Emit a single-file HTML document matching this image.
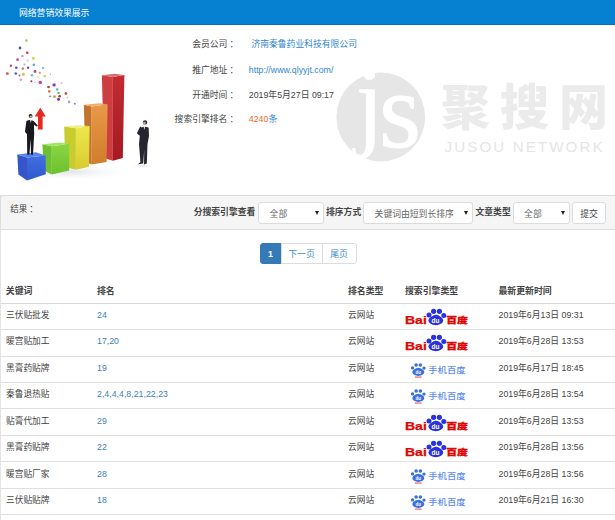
<!DOCTYPE html>
<html lang="zh-CN">
<head>
<meta charset="utf-8">
<title>网络营销效果展示</title>
<style>
*{box-sizing:border-box;margin:0;padding:0}
html,body{width:615px;height:520px;overflow:hidden;background:#fff}
body{font-family:"Liberation Sans","Noto Sans CJK SC",sans-serif;font-size:8.7px;color:#444;position:relative}
a{color:#428bca;text-decoration:none}
.hdr{position:absolute;left:0;top:0;width:615px;height:25px;border-bottom:1px solid #0b6db3;background:#0680d0;color:#fff;font-size:8.8px;line-height:26px;padding-left:19px}
.info span,.info a{position:absolute;height:14px;line-height:14px;white-space:nowrap;font-size:8.8px}
.info .lab{right:387.6px;text-align:right;color:#444}
.info .co{left:229.4px;color:#444}
.info .val{left:248.8px}
.art{position:absolute;left:0;top:24px}
.wm{position:absolute;left:330px;top:60px}
.panel{position:absolute;left:0;top:195px;width:616px;height:340px;border-left:1px solid #e4e4e4;border-top:1px solid #ddd}
.filter{position:absolute;left:0;top:195px;width:615px;height:35px;background:#f5f5f5;border-top:1px solid #ddd;border-bottom:1px solid #ddd;border-left:1px solid #ddd;border-radius:3px 0 0 0}
.filter .t{position:absolute;top:0;line-height:33px;font-weight:bold;color:#444;white-space:nowrap;font-size:8.8px}
.sel{position:absolute;top:6px;height:22px;border:1px solid #dcdcdc;border-radius:3px;background:#fff;color:#666;line-height:23.5px;white-space:nowrap;padding-left:10.6px;font-size:8.8px}
.sel:after{content:"";position:absolute;right:3.6px;top:7.6px;border-left:2.8px solid transparent;border-right:2.8px solid transparent;border-top:4px solid #222}
.btn{position:absolute;top:6px;height:22px;border:1px solid #dcdcdc;border-radius:3px;background:#fff;color:#444;line-height:23px;text-align:center;font-size:8.8px}
.pager{position:absolute;top:243px;left:259.5px;height:21px}
.pager span{position:absolute;top:0;height:21px;line-height:20px;font-size:8.9px;border:1px solid #ddd;text-align:center;color:#428bca;background:#fff}
.pager .on{background:#337ab7;border-color:#337ab7;color:#fff;font-weight:bold;border-radius:3px 0 0 3px}
.pager .last{border-radius:0 3px 3px 0}
.th{position:absolute;top:284px;height:14px;line-height:14px;font-weight:bold;color:#444;font-size:8.9px;white-space:nowrap}
.tr{position:absolute;left:1px;width:614px;height:1px;background:#e0e0e0}
.c{position:absolute;height:14px;line-height:14px;white-space:nowrap}
.lg{position:absolute}
.d{font-size:8.8px}
.n{font-size:8.8px;color:#3f7fb8}
.info a{color:#2f86d0}
</style>
</head>
<body>
<div class="hdr">网络营销效果展示</div>

<svg class="art" width="190" height="170" viewBox="0 24 190 170">
<defs>
<linearGradient id="gb" x1="0" y1="0" x2="0" y2="1"><stop offset="0" stop-color="#416ee0"/><stop offset="1" stop-color="#3058cc"/></linearGradient>
<linearGradient id="gg" x1="0" y1="0" x2="0" y2="1"><stop offset="0" stop-color="#8ad640"/><stop offset="1" stop-color="#6cc030"/></linearGradient>
<linearGradient id="gy" x1="0" y1="0" x2="0" y2="1"><stop offset="0" stop-color="#eee84c"/><stop offset="1" stop-color="#d6cc30"/></linearGradient>
<linearGradient id="go" x1="0" y1="0" x2="0" y2="1"><stop offset="0" stop-color="#e89a48"/><stop offset="1" stop-color="#d07c2c"/></linearGradient>
<linearGradient id="gr" x1="0" y1="0" x2="0" y2="1"><stop offset="0" stop-color="#c22c32"/><stop offset="1" stop-color="#a41a22"/></linearGradient>
<radialGradient id="sh"><stop offset="0" stop-color="#d8dce4" stop-opacity=".8"/><stop offset="1" stop-color="#fff" stop-opacity="0"/></radialGradient>
</defs>
<!-- floor shadows -->
<ellipse cx="72" cy="172" rx="62" ry="9" fill="url(#sh)"/>
<ellipse cx="143" cy="166" rx="12" ry="3" fill="url(#sh)"/>
<!-- red bar -->
<polygon points="101.9,75.3 112.9,77 112.9,160.8 104,158" fill="#cc3e42"/>
<polygon points="112.9,77 124.4,75 122.8,158 112.9,160.8" fill="url(#gr)"/>
<polygon points="101.9,75.3 114.5,73.8 124.4,75 112.9,77" fill="#de6e70"/>
<!-- orange bar -->
<polygon points="83.9,104.8 91.7,106.4 91.7,164.6 85.2,162" fill="#c4742a"/>
<polygon points="91.7,106.4 107.6,104.2 106.6,162 91.7,164.6" fill="url(#go)"/>
<polygon points="83.9,104.8 99.5,103.2 107.6,104.2 91.7,106.4" fill="#eeb070"/>
<!-- yellow bar -->
<polygon points="64.2,126.6 75.9,128.2 75.9,169.8 65.2,167" fill="#c8cc2e"/>
<polygon points="75.9,128.2 89.6,126 89,166.8 75.9,169.8" fill="url(#gy)"/>
<polygon points="64.2,126.6 78.5,125.2 89.6,126 75.9,128.2" fill="#f0ee80"/>
<!-- green bar -->
<polygon points="42.4,144.2 51.8,146.2 51.8,174.4 43.8,170.6" fill="#6cc032"/>
<polygon points="51.8,146.2 69.2,143.8 69.2,170.4 51.8,174.4" fill="url(#gg)"/>
<polygon points="42.4,144.2 60,142.4 69.2,143.8 51.8,146.2" fill="#a2e460"/>
<!-- blue cube -->
<polygon points="17.3,154.6 27,157.4 27,180.4 18.4,174.4" fill="#3456c8"/>
<polygon points="27,157.4 45.6,155.4 45.8,174.2 27,180.4" fill="url(#gb)"/>
<polygon points="17.3,154.6 36,152.2 45.6,155.4 27,157.4" fill="#5a84ea"/>
<!-- red arrow -->
<polygon points="40.3,107.8 45.8,116.4 42.6,116.4 42.6,129.4 38,129.4 38,116.4 34.8,116.4" fill="#e8281c"/>
<!-- woman -->
<g fill="#1a1a1e">
<circle cx="30.6" cy="116" r="1.9"/>
<path d="M26.4 121 Q30.2 119 33.8 121.2 L37.8 125.6 L37 126.8 L34 124.8 L34.2 134 L33 154.8 L31 154.8 L30.6 139 L29.4 154.8 L27.2 154.8 L27 134 L25.8 133 L25 131.4 Z"/>
</g>
<circle cx="30.9" cy="116.6" r="1.2" fill="#e0b090"/>
<path d="M30 119.6 L31.6 119.6 L30.8 123 Z" fill="#fff"/>
<!-- man -->
<g fill="#26262e">
<circle cx="145" cy="122.4" r="2.2"/>
<path d="M140.8 127.8 Q144.8 125.6 148.7 127.8 L149 136 L147.5 144 L146.8 163.4 L144 164.4 L144.2 150 L143.2 163.6 L138 164.2 L140.4 162 L139 144 L139.8 135.8 L136.9 133.3 L140.2 126.4 L141.4 127 L139.8 131 Z"/>
</g>
<circle cx="144.4" cy="123" r="1.35" fill="#dca888"/>
<path d="M143.6 126.6 L145.2 126.6 L144.4 130 Z" fill="#e8e8f0"/>
<!-- confetti -->
<g opacity=".95">
<circle cx="26.3" cy="40.6" r="1.3" fill="#a8c850"/><circle cx="20" cy="48" r="1.4" fill="#3050c0"/><circle cx="27.2" cy="52.8" r="1.3" fill="#c03040"/>
<circle cx="22.4" cy="56.1" r="1.2" fill="#b090d0"/><circle cx="17.6" cy="59.7" r="1.4" fill="#c040a0"/><circle cx="33.3" cy="58.5" r="1.4" fill="#d8d040"/>
<circle cx="27.6" cy="60.6" r="1" fill="#e0c0a0"/><circle cx="24.4" cy="64.5" r="1" fill="#b8a0d8"/><circle cx="33.8" cy="64.7" r="1.3" fill="#50a0d0"/>
<circle cx="10.9" cy="65.8" r="1.2" fill="#c04050"/><circle cx="16.3" cy="67.8" r="1.3" fill="#4050c0"/><circle cx="22.8" cy="68.6" r="1.3" fill="#d08050"/>
<circle cx="28.1" cy="67.8" r="1.2" fill="#8040a0"/><circle cx="43.1" cy="68" r="1.2" fill="#80c0e0"/><circle cx="7.3" cy="73.5" r="1.5" fill="#d06050"/>
<circle cx="15.8" cy="73.5" r="1.3" fill="#5050c0"/><circle cx="23.3" cy="74.3" r="1.5" fill="#c0c040"/><circle cx="19.5" cy="75.6" r="1" fill="#a07050"/>
<circle cx="35" cy="71.5" r="1.4" fill="#c03080"/><circle cx="39.8" cy="72.8" r="1.1" fill="#e09050"/><circle cx="32" cy="75.3" r="1.3" fill="#60c0c0"/>
<circle cx="44.7" cy="76.1" r="1.4" fill="#d0d060"/><circle cx="37.9" cy="77.2" r="1" fill="#e0e090"/><circle cx="50.4" cy="74.3" r=".8" fill="#b0b0b0"/>
<circle cx="20.8" cy="79.7" r="1.3" fill="#c0a0e0"/><circle cx="31.4" cy="81.3" r="1" fill="#a02030"/><circle cx="35" cy="82.1" r=".9" fill="#d0c0e0"/>
<circle cx="40.3" cy="82.4" r="1.7" fill="#c030a0"/><circle cx="54.1" cy="84.9" r="1.7" fill="#8030c0"/><circle cx="61.5" cy="82.9" r=".9" fill="#f0b0c0"/>
<circle cx="48.5" cy="87" r="1.3" fill="#c03030"/><circle cx="57.2" cy="89.4" r="1.2" fill="#40b0a0"/><circle cx="49.3" cy="91.4" r="1.3" fill="#e07030"/>
<circle cx="65.9" cy="93.5" r="1.4" fill="#d05030"/><circle cx="58.5" cy="93" r="1.2" fill="#60b050"/><circle cx="54.5" cy="96.7" r="1.4" fill="#a0b030"/>
<circle cx="59.7" cy="96.2" r="1.3" fill="#c02040"/><circle cx="50.1" cy="96.4" r=".8" fill="#4040c0"/><circle cx="58.5" cy="99.2" r="1.5" fill="#7020c0"/>
<circle cx="69.1" cy="101.9" r="1.3" fill="#a0a0b0"/><circle cx="74.8" cy="103.7" r="1" fill="#8080c0"/><circle cx="67.5" cy="97.5" r=".9" fill="#d0d0a0"/>
</g>
</svg>

<svg class="wm" width="285" height="120" viewBox="330 60 285 120">
<circle cx="380.8" cy="117" r="44.4" fill="#e6e6e6"/><circle cx="367.5" cy="74" r="3.2" fill="#e6e6e6"/>
<g font-family="Liberation Serif, serif" fill="#fff" stroke="#fff" stroke-linejoin="round">
<text x="355.5" y="137" font-size="101" stroke-width="0.5">j</text>
<text x="379" y="146.8" font-size="108" stroke-width="0.8">s</text>
</g>
<text x="441" y="124.6" font-family="Liberation Sans, Noto Sans CJK SC, sans-serif" font-weight="900" font-size="49" fill="#ebebeb" textLength="167" lengthAdjust="spacing">聚搜网</text>
<text x="444.6" y="152.4" font-family="Liberation Sans, sans-serif" font-size="15.2" fill="#e5e5e5" textLength="158" lengthAdjust="spacing">JUSOU NETWORK</text>
</svg>

<div class="info">
  <span class="lab" style="top:37px">会员公司</span><span class="co" style="top:37px">：</span><a class="val" style="top:37px;left:251.4px">济南秦鲁药业科技有限公司</a>
  <span class="lab" style="top:63px">推广地址</span><span class="co" style="top:63px">：</span><a class="val" style="top:63px">http://www.qlyyjt.com/</a>
  <span class="lab" style="top:88px">开通时间</span><span class="co" style="top:88px">：</span><span class="val" style="top:88px;color:#444">2019年5月27日 09:17</span>
  <span class="lab" style="top:112px">搜索引擎排名</span><span class="co" style="top:112px">：</span><span class="val" style="top:112px"><span style="position:static;color:#f5682a">4240</span><a style="position:static">条</a></span>
</div>

<div class="panel"></div>
<div class="filter">
  <span class="t" style="left:9.2px;font-weight:normal;top:-3.4px;font-size:8.6px">结果<span style="margin-left:1.8px">：</span></span>
  <span class="t" style="left:192.7px">分搜索引擎查看</span>
  <span class="sel" style="left:257px;width:66px">全部</span>
  <span class="t" style="left:325px">排序方式</span>
  <span class="sel" style="left:362px;width:110px">关键词由短到长排序</span>
  <span class="t" style="left:474.5px">文章类型</span>
  <span class="sel" style="left:511.5px;width:57.5px">全部</span>
  <span class="btn" style="left:571px;width:34px">提交</span>
</div>
<div class="pager">
  <span class="on" style="left:0;width:22px">1</span>
  <span style="left:21px;width:42px">下一页</span>
  <span class="last" style="left:62px;width:35px">尾页</span>
</div>

<span class="th" style="left:5.8px">关键词</span>
<span class="th" style="left:97px">排名</span>
<span class="th" style="left:348px">排名类型</span>
<span class="th" style="left:405px">搜索引擎类型</span>
<span class="th" style="left:498.5px">最新更新时间</span>
<div class="tr" style="top:302.6px;height:1px;background:#d8d8d8"></div>
<div class="tr" style="top:329.06px"></div>
<span class="c" style="left:6px;top:307.93px">三伏贴批发</span><a class="c n" style="left:97px;top:307.93px">24</a><span class="c" style="left:348px;top:307.93px">云网站</span><span class="c d" style="left:498.5px;top:307.93px">2019年6月13日 09:31</span>
<svg class="lg" width="66" height="18" viewBox="0 0 66 18" style="left:403px;top:307.80px">
<text x="2" y="15.6" font-family="Liberation Sans, sans-serif" font-weight="bold" font-size="10.3" fill="#e10601" stroke="#e10601" stroke-width="0.25" textLength="21.8" lengthAdjust="spacingAndGlyphs">Bai</text>
<g fill="#2932e1"><ellipse cx="32.8" cy="12.6" rx="7.4" ry="4.6"/><path d="M26.6 11 Q33 2.6 39.4 11 Z"/><circle cx="26" cy="7" r="2.5"/><circle cx="30.6" cy="3.3" r="2.6"/><circle cx="36.4" cy="3.3" r="2.6"/><circle cx="40.8" cy="7.4" r="2.5"/></g>
<text x="28.6" y="15.3" font-family="Liberation Sans, sans-serif" font-weight="bold" font-size="6.5" fill="#fff">du</text>
<text x="43.3" y="15.3" font-family="Liberation Sans, Noto Sans CJK SC, sans-serif" font-weight="900" font-size="8.5" fill="#e10601" stroke="#e10601" stroke-width="0.3" textLength="21.6" lengthAdjust="spacingAndGlyphs">百度</text>
</svg>
<div class="tr" style="top:355.52px"></div>
<span class="c" style="left:6px;top:334.39px">暖宫贴加工</span><a class="c n" style="left:97px;top:334.39px">17,20</a><span class="c" style="left:348px;top:334.39px">云网站</span><span class="c d" style="left:498.5px;top:334.39px">2019年6月28日 13:53</span>
<svg class="lg" width="66" height="18" viewBox="0 0 66 18" style="left:403px;top:334.26px">
<text x="2" y="15.6" font-family="Liberation Sans, sans-serif" font-weight="bold" font-size="10.3" fill="#e10601" stroke="#e10601" stroke-width="0.25" textLength="21.8" lengthAdjust="spacingAndGlyphs">Bai</text>
<g fill="#2932e1"><ellipse cx="32.8" cy="12.6" rx="7.4" ry="4.6"/><path d="M26.6 11 Q33 2.6 39.4 11 Z"/><circle cx="26" cy="7" r="2.5"/><circle cx="30.6" cy="3.3" r="2.6"/><circle cx="36.4" cy="3.3" r="2.6"/><circle cx="40.8" cy="7.4" r="2.5"/></g>
<text x="28.6" y="15.3" font-family="Liberation Sans, sans-serif" font-weight="bold" font-size="6.5" fill="#fff">du</text>
<text x="43.3" y="15.3" font-family="Liberation Sans, Noto Sans CJK SC, sans-serif" font-weight="900" font-size="8.5" fill="#e10601" stroke="#e10601" stroke-width="0.3" textLength="21.6" lengthAdjust="spacingAndGlyphs">百度</text>
</svg>
<div class="tr" style="top:381.98px"></div>
<span class="c" style="left:6px;top:360.85px">黑膏药贴牌</span><a class="c n" style="left:97px;top:360.85px">19</a><span class="c" style="left:348px;top:360.85px">云网站</span><span class="c d" style="left:498.5px;top:360.85px">2019年6月17日 18:45</span>
<svg class="lg" width="66" height="18" viewBox="0 0 66 18" style="left:403px;top:360.72px">
<g fill="#3a6fe0" transform="translate(0,0.7)"><ellipse cx="15.3" cy="10.4" rx="6" ry="3.8"/><path d="M10 9.6 Q15.3 2.4 20.6 9.6 Z"/><circle cx="9.5" cy="6.2" r="1.7"/><circle cx="13.1" cy="3.3" r="1.8"/><circle cx="17.4" cy="3.3" r="1.8"/><circle cx="21" cy="6.4" r="1.7"/></g>
<text x="12.4" y="13.3" font-family="Liberation Sans, sans-serif" font-weight="bold" font-size="4.6" fill="#fff">du</text>
<rect x="11.8" y="15.6" width="6.8" height="0.9" fill="#e8303a"/>
<text x="25.3" y="12.2" font-family="Liberation Sans, Noto Sans CJK SC, sans-serif" font-weight="500" font-size="7.7" fill="#5c8cf0" textLength="37.2" lengthAdjust="spacingAndGlyphs">手机百度</text>
</svg>
<div class="tr" style="top:408.44px"></div>
<span class="c" style="left:6px;top:387.31px">秦鲁退热贴</span><a class="c n" style="left:97px;top:387.31px">2,4,4,4,8,21,22,23</a><span class="c" style="left:348px;top:387.31px">云网站</span><span class="c d" style="left:498.5px;top:387.31px">2019年6月28日 13:54</span>
<svg class="lg" width="66" height="18" viewBox="0 0 66 18" style="left:403px;top:387.18px">
<g fill="#3a6fe0" transform="translate(0,0.7)"><ellipse cx="15.3" cy="10.4" rx="6" ry="3.8"/><path d="M10 9.6 Q15.3 2.4 20.6 9.6 Z"/><circle cx="9.5" cy="6.2" r="1.7"/><circle cx="13.1" cy="3.3" r="1.8"/><circle cx="17.4" cy="3.3" r="1.8"/><circle cx="21" cy="6.4" r="1.7"/></g>
<text x="12.4" y="13.3" font-family="Liberation Sans, sans-serif" font-weight="bold" font-size="4.6" fill="#fff">du</text>
<rect x="11.8" y="15.6" width="6.8" height="0.9" fill="#e8303a"/>
<text x="25.3" y="12.2" font-family="Liberation Sans, Noto Sans CJK SC, sans-serif" font-weight="500" font-size="7.7" fill="#5c8cf0" textLength="37.2" lengthAdjust="spacingAndGlyphs">手机百度</text>
</svg>
<div class="tr" style="top:434.90px"></div>
<span class="c" style="left:6px;top:413.77px">贴膏代加工</span><a class="c n" style="left:97px;top:413.77px">29</a><span class="c" style="left:348px;top:413.77px">云网站</span><span class="c d" style="left:498.5px;top:413.77px">2019年6月28日 13:53</span>
<svg class="lg" width="66" height="18" viewBox="0 0 66 18" style="left:403px;top:413.64px">
<text x="2" y="15.6" font-family="Liberation Sans, sans-serif" font-weight="bold" font-size="10.3" fill="#e10601" stroke="#e10601" stroke-width="0.25" textLength="21.8" lengthAdjust="spacingAndGlyphs">Bai</text>
<g fill="#2932e1"><ellipse cx="32.8" cy="12.6" rx="7.4" ry="4.6"/><path d="M26.6 11 Q33 2.6 39.4 11 Z"/><circle cx="26" cy="7" r="2.5"/><circle cx="30.6" cy="3.3" r="2.6"/><circle cx="36.4" cy="3.3" r="2.6"/><circle cx="40.8" cy="7.4" r="2.5"/></g>
<text x="28.6" y="15.3" font-family="Liberation Sans, sans-serif" font-weight="bold" font-size="6.5" fill="#fff">du</text>
<text x="43.3" y="15.3" font-family="Liberation Sans, Noto Sans CJK SC, sans-serif" font-weight="900" font-size="8.5" fill="#e10601" stroke="#e10601" stroke-width="0.3" textLength="21.6" lengthAdjust="spacingAndGlyphs">百度</text>
</svg>
<div class="tr" style="top:461.36px"></div>
<span class="c" style="left:6px;top:440.23px">黑膏药贴牌</span><a class="c n" style="left:97px;top:440.23px">22</a><span class="c" style="left:348px;top:440.23px">云网站</span><span class="c d" style="left:498.5px;top:440.23px">2019年6月28日 13:56</span>
<svg class="lg" width="66" height="18" viewBox="0 0 66 18" style="left:403px;top:440.10px">
<text x="2" y="15.6" font-family="Liberation Sans, sans-serif" font-weight="bold" font-size="10.3" fill="#e10601" stroke="#e10601" stroke-width="0.25" textLength="21.8" lengthAdjust="spacingAndGlyphs">Bai</text>
<g fill="#2932e1"><ellipse cx="32.8" cy="12.6" rx="7.4" ry="4.6"/><path d="M26.6 11 Q33 2.6 39.4 11 Z"/><circle cx="26" cy="7" r="2.5"/><circle cx="30.6" cy="3.3" r="2.6"/><circle cx="36.4" cy="3.3" r="2.6"/><circle cx="40.8" cy="7.4" r="2.5"/></g>
<text x="28.6" y="15.3" font-family="Liberation Sans, sans-serif" font-weight="bold" font-size="6.5" fill="#fff">du</text>
<text x="43.3" y="15.3" font-family="Liberation Sans, Noto Sans CJK SC, sans-serif" font-weight="900" font-size="8.5" fill="#e10601" stroke="#e10601" stroke-width="0.3" textLength="21.6" lengthAdjust="spacingAndGlyphs">百度</text>
</svg>
<div class="tr" style="top:487.82px"></div>
<span class="c" style="left:6px;top:466.69px">暖宫贴厂家</span><a class="c n" style="left:97px;top:466.69px">28</a><span class="c" style="left:348px;top:466.69px">云网站</span><span class="c d" style="left:498.5px;top:466.69px">2019年6月28日 13:56</span>
<svg class="lg" width="66" height="18" viewBox="0 0 66 18" style="left:403px;top:466.56px">
<g fill="#3a6fe0" transform="translate(0,0.7)"><ellipse cx="15.3" cy="10.4" rx="6" ry="3.8"/><path d="M10 9.6 Q15.3 2.4 20.6 9.6 Z"/><circle cx="9.5" cy="6.2" r="1.7"/><circle cx="13.1" cy="3.3" r="1.8"/><circle cx="17.4" cy="3.3" r="1.8"/><circle cx="21" cy="6.4" r="1.7"/></g>
<text x="12.4" y="13.3" font-family="Liberation Sans, sans-serif" font-weight="bold" font-size="4.6" fill="#fff">du</text>
<rect x="11.8" y="15.6" width="6.8" height="0.9" fill="#e8303a"/>
<text x="25.3" y="12.2" font-family="Liberation Sans, Noto Sans CJK SC, sans-serif" font-weight="500" font-size="7.7" fill="#5c8cf0" textLength="37.2" lengthAdjust="spacingAndGlyphs">手机百度</text>
</svg>
<div class="tr" style="top:514.28px"></div>
<span class="c" style="left:6px;top:493.15px">三伏贴贴牌</span><a class="c n" style="left:97px;top:493.15px">18</a><span class="c" style="left:348px;top:493.15px">云网站</span><span class="c d" style="left:498.5px;top:493.15px">2019年6月21日 16:30</span>
<svg class="lg" width="66" height="18" viewBox="0 0 66 18" style="left:403px;top:493.02px">
<g fill="#3a6fe0" transform="translate(0,0.7)"><ellipse cx="15.3" cy="10.4" rx="6" ry="3.8"/><path d="M10 9.6 Q15.3 2.4 20.6 9.6 Z"/><circle cx="9.5" cy="6.2" r="1.7"/><circle cx="13.1" cy="3.3" r="1.8"/><circle cx="17.4" cy="3.3" r="1.8"/><circle cx="21" cy="6.4" r="1.7"/></g>
<text x="12.4" y="13.3" font-family="Liberation Sans, sans-serif" font-weight="bold" font-size="4.6" fill="#fff">du</text>
<rect x="11.8" y="15.6" width="6.8" height="0.9" fill="#e8303a"/>
<text x="25.3" y="12.2" font-family="Liberation Sans, Noto Sans CJK SC, sans-serif" font-weight="500" font-size="7.7" fill="#5c8cf0" textLength="37.2" lengthAdjust="spacingAndGlyphs">手机百度</text>
</svg>
</body>
</html>
